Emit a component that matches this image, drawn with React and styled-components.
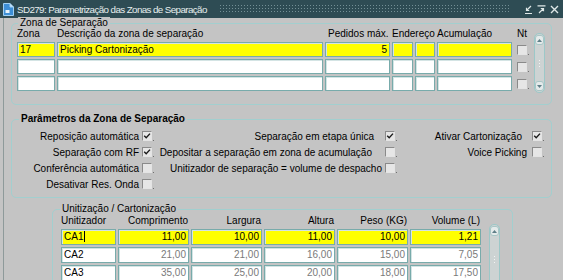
import React from 'react';
import styled, { createGlobalStyle } from 'styled-components';

const GlobalStyle = createGlobalStyle`
  html, body {
    margin: 0;
    padding: 0;
    background: #c4c4c4;
  }
  body {
    font-family: "Liberation Sans", Arial, sans-serif;
    font-size: 10px;
    color: #000;
  }
`;

const Window = styled.div`
  width: 563px;
  height: 280px;
  overflow: hidden;
  background: #c4c4c4;
  display: flex;
  flex-direction: column;
`;

const TitleBar = styled.div`
  height: 18px;
  flex: none;
  background: #2e4c54;
  display: flex;
  align-items: center;
  padding: 0 4px 0 3px;
  gap: 3px;
`;

const TitleText = styled.span`
  color: #e6eeee;
  font-size: 9.8px;
  letter-spacing: -0.6px;
  white-space: nowrap;
`;

const Dots = styled.div`
  flex: 1;
  height: 10px;
  margin: 0 10px 0 9px;
  background-image: radial-gradient(circle, #738f95 0.7px, transparent 0.9px);
  background-size: 3px 3px;
`;

const WinButtons = styled.div`
  display: flex;
  gap: 4px;
  align-items: center;
`;

const Body = styled.div`
  flex: 1;
  padding: 0 11px;
  box-shadow: inset 3px 0 0 #c4c4c4, inset 4px 0 0 #8e9a9a;
  display: flex;
  flex-direction: column;
`;

const Frame = styled.div`
  border: 1px solid #a2cfcf;
  border-radius: 5px;
  margin-top: ${p => p.$top}px;
  margin-left: ${p => p.$left || 0}px;
  width: ${p => p.$width}px;
  padding: 0 0 ${p => p.$bottom || 0}px ${p => p.$padLeft}px;
  box-sizing: border-box;
`;

const Legend = styled.div`
  width: fit-content;
  margin: -7px 0 0 ${p => p.$offset}px;
  padding: 0 2px;
  line-height: 12px;
  background: #c4c4c4;
  font-weight: ${p => (p.$bold ? 700 : 400)};
`;

const ZoneArea = styled.div`
  display: flex;
  align-items: flex-start;
`;

const ZoneGrid = styled.div`
  display: grid;
  grid-template-columns: 38px 266px 65px 21px 20px 75px;
  grid-template-rows: 11px 15px 15px 15px;
  column-gap: 2px;
  row-gap: 2px;
`;

const Head = styled.div`
  line-height: 12px;
  white-space: nowrap;
  text-align: ${p => p.$align || 'left'};
  padding: 0 ${p => p.$pad || 0}px;
  grid-column: ${p => p.$span || 'auto'};
  align-self: end;
`;

const Field = styled.div`
  box-sizing: border-box;
  height: ${p => p.$h || 15}px;
  border: 1px solid #78abab;
  box-shadow: inset 1px 1px 0 #d4e4e4;
  background: ${p => (p.$hl ? '#ffff00' : '#ffffff')};
  color: ${p => (p.$muted ? '#7a7a7a' : '#000')};
  text-align: ${p => p.$align || 'left'};
  padding: 0 2px;
  line-height: ${p => (p.$h || 15) - 2}px;
  white-space: nowrap;
  overflow: hidden;
`;

const Caret = styled.span`
  display: inline-block;
  width: 1px;
  height: 11px;
  background: #000;
  vertical-align: -2px;
  margin-left: 1px;
`;

const NtCol = styled.div`
  display: grid;
  grid-template-rows: 11px 15px 15px 15px;
  row-gap: 2px;
  margin-left: 5px;
  width: 12px;
  justify-items: start;
  align-items: center;
`;

const CheckBox = styled.span`
  position: relative;
  display: inline-block;
  box-sizing: border-box;
  width: 10px;
  height: 10px;
  border: 1px solid;
  border-color: #8a8a8a #e4e4e4 #e4e4e4 #8a8a8a;
  background: #e6e6e6;
  flex: none;

  &::after {
    content: '';
    position: absolute;
    right: -3px;
    bottom: -1px;
    width: 1px;
    height: 1px;
    background: #707070;
  }

  svg {
    display: block;
  }
`;

const ScrollTrack = styled.div`
  box-sizing: border-box;
  width: 11px;
  height: ${p => p.$h}px;
  margin: ${p => p.$mt}px 0 0 ${p => p.$ml}px;
  border: 1px solid #9cc8c8;
  border-radius: 5px;
  background: #cdd3d3;
  display: flex;
  flex-direction: column;
  justify-content: space-between;
  align-items: center;
  padding: 1px 0;
`;

const ScrollBtn = styled.div`
  width: 7px;
  height: 8px;
  border-radius: 3px;
  background: #e4eaea;
  border: 1px solid #a8c6c6;
  display: flex;
  align-items: center;
  justify-content: center;
`;

const Grip = styled.div`
  display: flex;
  flex-direction: column;
  gap: 2px;
  align-items: center;
  span {
    width: 1px;
    height: 1px;
    background: #f4f4f4;
  }
`;

const ParamGrid = styled.div`
  display: grid;
  grid-template-columns: 138px 243px 147px;
  grid-auto-rows: 16px;
  margin-top: 3px;
`;

const Param = styled.label`
  display: flex;
  align-items: center;
  justify-content: flex-end;
  gap: ${p => p.$gap}px;
  padding-right: 3px;
  white-space: nowrap;
  grid-column: ${p => p.$col};
  grid-row: ${p => p.$row};
`;

const UnitArea = styled.div`
  display: flex;
  align-items: flex-start;
`;

const UnitGrid = styled.div`
  display: grid;
  grid-template-columns: 55px 71px 71px 71px 71px 71px;
  grid-template-rows: 12px 16px 16px 16px;
  column-gap: 2px;
  row-gap: 2px;
`;

const Check = ({ on }) => (
  <CheckBox>
    {on && (
      <svg width="8" height="8" viewBox="0 0 8 8">
        <path d="M1.2 3.8 L3.2 5.8 L7 1.6" fill="none" stroke="#1a1a1a" strokeWidth="1.4" />
      </svg>
    )}
  </CheckBox>
);

const Arrow = ({ down }) => (
  <svg width="5" height="3" viewBox="0 0 5 3">
    <path d={down ? 'M0 0 L5 0 L2.5 3 Z' : 'M0 3 L5 3 L2.5 0 Z'} fill="#5f7f88" />
  </svg>
);

const Scrollbar = ({ h, mt, ml }) => (
  <ScrollTrack $h={h} $mt={mt} $ml={ml}>
    <ScrollBtn><Arrow /></ScrollBtn>
    <Grip><span /><span /><span /></Grip>
    <ScrollBtn><Arrow down /></ScrollBtn>
  </ScrollTrack>
);

const DocIcon = () => (
  <svg width="11" height="13" viewBox="0 0 11 13">
    <path d="M0.5 0.5 H7 L10.5 4 V12.5 H0.5 Z" fill="#3d8fd6" stroke="#9fd0f4" />
    <path d="M7 0.5 V4 H10.5" fill="#cfe8fb" stroke="#9fd0f4" />
    <rect x="2.5" y="7" width="4" height="3" fill="#e6f3fc" />
  </svg>
);

const zonas = [
  { zona: '17', desc: 'Picking Cartonização', ped: '5', hl: true },
  { zona: '', desc: '', ped: '' },
  { zona: '', desc: '', ped: '' },
];

const unitizadores = [
  { id: 'CA1', v: ['11,00', '10,00', '11,00', '10,00', '1,21'], hl: true },
  { id: 'CA2', v: ['21,00', '21,00', '16,00', '15,00', '7,05'] },
  { id: 'CA3', v: ['35,00', '25,00', '20,00', '18,00', '17,50'] },
];

const params = [
  { label: 'Reposição automática', on: true, col: 1, row: 1, gap: 3 },
  { label: 'Separação com RF', on: true, col: 1, row: 2, gap: 3 },
  { label: 'Conferência automática', col: 1, row: 3, gap: 3 },
  { label: 'Desativar Res. Onda', col: 1, row: 4, gap: 3 },
  { label: 'Separação em etapa única', on: true, col: 2, row: 1, gap: 11 },
  { label: 'Depositar a separação em zona de acumulação', col: 2, row: 2, gap: 13 },
  { label: 'Unitizador de separação = volume de despacho', col: 2, row: 3, gap: 3 },
  { label: 'Ativar Cartonização', on: true, col: 3, row: 1, gap: 10 },
  { label: 'Voice Picking', col: 3, row: 2, gap: 5 },
];

export default function App() {
  return (
    <Window>
      <GlobalStyle />
      <TitleBar>
        <DocIcon />
        <TitleText>SD279: Parametrização das Zonas de Separação</TitleText>
        <Dots />
        <WinButtons>
          <svg width="9" height="9" viewBox="0 0 9 9">
            <path d="M1 8.5 H8 M7 1 L2.5 5.5 M2.5 2.8 V5.5 H5.2" fill="none" stroke="#dfe8e8" strokeWidth="1.2" />
          </svg>
          <svg width="9" height="9" viewBox="0 0 9 9">
            <path d="M0.5 0.8 H8.5 M2 8 L6.5 3.5 M3.8 3.5 H6.5 V6.2" fill="none" stroke="#dfe8e8" strokeWidth="1.2" />
          </svg>
          <svg width="9" height="9" viewBox="0 0 9 9">
            <path d="M1 1 L8 8 M8 1 L1 8" fill="none" stroke="#dfe8e8" strokeWidth="1.4" />
          </svg>
        </WinButtons>
      </TitleBar>

      <Body>
        <Frame $top={5} $width={541} $padLeft={5} $bottom={11}>
          <Legend $offset={1}>Zona de Separação</Legend>
          <ZoneArea>
            <ZoneGrid>
              <Head>Zona</Head>
              <Head>Descrição da zona de separação</Head>
              <Head $align="right" $pad={3}>Pedidos máx.</Head>
              <Head $span="span 2">Endereço</Head>
              <Head>Acumulação</Head>
              {zonas.map((z, i) => (
                <React.Fragment key={i}>
                  <Field $hl={z.hl}>{z.zona}</Field>
                  <Field $hl={z.hl}>{z.desc}</Field>
                  <Field $hl={z.hl} $align="right">{z.ped}</Field>
                  <Field $hl={z.hl} />
                  <Field $hl={z.hl} />
                  <Field $hl={z.hl} />
                </React.Fragment>
              ))}
            </ZoneGrid>
            <NtCol>
              <Head>Nt</Head>
              <Check />
              <Check />
              <Check />
            </NtCol>
            <Scrollbar h={60} mt={4} ml={5} />
          </ZoneArea>
        </Frame>

        <Frame $top={14} $width={541} $padLeft={5} $bottom={5}>
          <Legend $offset={2} $bold>Parâmetros da Zona de Separação</Legend>
          <ParamGrid>
            {params.map(p => (
              <Param key={p.label} $col={p.col} $row={p.row} $gap={p.gap}>
                {p.label}
                <Check on={p.on} />
              </Param>
            ))}
          </ParamGrid>
        </Frame>

        <Frame $top={11} $left={41} $width={461} $padLeft={8}>
          <Legend $offset={-1}>Unitização / Cartonização</Legend>
          <UnitArea>
            <UnitGrid>
              <Head>Unitizador</Head>
              <Head $align="right" $pad={1}>Comprimento</Head>
              <Head $align="right" $pad={1}>Largura</Head>
              <Head $align="right" $pad={1}>Altura</Head>
              <Head $align="right" $pad={1}>Peso (KG)</Head>
              <Head $align="right" $pad={1}>Volume (L)</Head>
              {unitizadores.map(u => (
                <React.Fragment key={u.id}>
                  <Field $h={16} $hl={u.hl}>
                    {u.id}
                    {u.hl && <Caret />}
                  </Field>
                  {u.v.map((v, i) => (
                    <Field key={i} $h={16} $hl={u.hl} $muted={!u.hl} $align="right">{v}</Field>
                  ))}
                </React.Fragment>
              ))}
            </UnitGrid>
            <Scrollbar h={70} mt={9} ml={8} />
          </UnitArea>
        </Frame>
      </Body>
    </Window>
  );
}
